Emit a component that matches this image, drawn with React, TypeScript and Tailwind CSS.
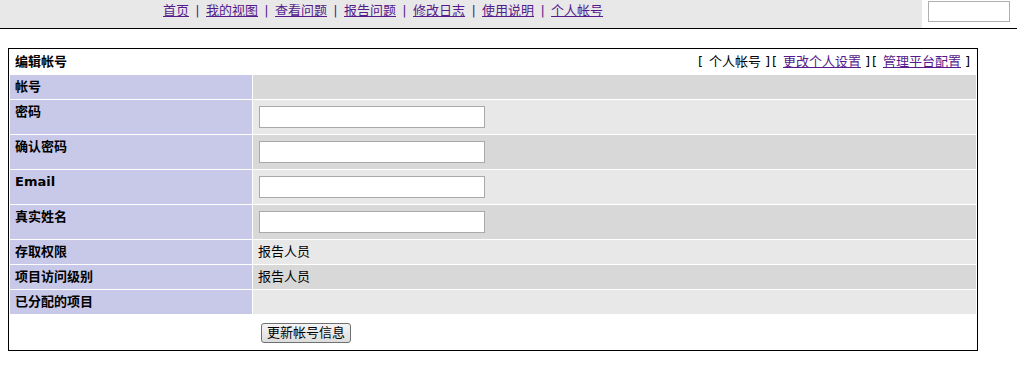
import React from "react";

const font = { fontFamily: '"DejaVu Sans", "Noto Sans CJK SC", sans-serif' };

const navLinks = ["首页", "我的视图", "查看问题", "报告问题", "修改日志", "使用说明", "个人帐号"];

type Row = { label: string; kind: "empty" | "input" | "text"; value?: string; dark: boolean };

const rows: Row[] = [
  { label: "帐号", kind: "empty", dark: true },
  { label: "密码", kind: "input", dark: false },
  { label: "确认密码", kind: "input", dark: true },
  { label: "Email", kind: "input", dark: false },
  { label: "真实姓名", kind: "input", dark: true },
  { label: "存取权限", kind: "text", value: "报告人员", dark: false },
  { label: "项目访问级别", kind: "text", value: "报告人员", dark: true },
  { label: "已分配的项目", kind: "empty", dark: false },
];

function Bracketed({ children, link }: { children: React.ReactNode; link: boolean }) {
  return (
    <span className="inline-flex">
      <span className="inline-block w-[11px] text-left">[</span>
      {link ? (
        <a href="#" className="text-[#551a8b] underline">
          {children}
        </a>
      ) : (
        <span>{children}</span>
      )}
      <span className="inline-block w-[11px] text-right pr-[2px]">]</span>
    </span>
  );
}

export default function App() {
  return (
    <div className="bg-white min-h-[366px] text-[13px] text-black" style={font}>
      {/* top menu */}
      <div className="flex h-[29px] border-b border-black">
        <div className="w-[922px] h-[28px] bg-[#e8e8e8] pl-[163px] pt-[3px] leading-[16px] flex">
          {navLinks.map((l, i) => (
            <React.Fragment key={l}>
              <a href="#" className="text-[#551a8b] underline">
                {l}
              </a>
              {i < navLinks.length - 1 && (
                <span className="inline-block w-[17px] text-center text-[#551a8b]">|</span>
              )}
            </React.Fragment>
          ))}
        </div>
        <div className="flex-1 h-[28px] bg-white pl-[6px] pt-px">
          <input className="w-[82px] h-[21px] border border-[#b0b0b0] bg-white" />
        </div>
      </div>

      {/* main table */}
      <div className="ml-[8px] mt-[19px] w-[970px] border border-black p-px">
        <div className="grid grid-cols-[242px_723px] gap-px leading-[16px]">
          <div className="col-span-2 h-[24px] flex items-center justify-between pl-[5px] pr-[4px]">
            <span className="font-bold">编辑帐号</span>
            <span className="flex">
              <Bracketed link={false}>个人帐号</Bracketed>
              <Bracketed link={true}>更改个人设置</Bracketed>
              <Bracketed link={true}>管理平台配置</Bracketed>
            </span>
          </div>
          {rows.map((r) => {
            const h = r.kind === "input" ? "h-[34px]" : "h-[24px]";
            const bg = r.dark ? "bg-[#d8d8d8]" : "bg-[#e8e8e8]";
            return (
              <React.Fragment key={r.label}>
                <div className={`${h} bg-[#c8c8e8] pl-[5px] pt-[4px] font-bold`}>{r.label}</div>
                <div className={`${h} ${bg} pl-[5px] ${r.kind === "input" ? "pt-[6px]" : "pt-[4px]"}`}>
                  {r.kind === "input" && (
                    <input className="ml-px w-[226px] h-[22px] border border-[#a9a9a9] bg-white block" />
                  )}
                  {r.kind === "text" && <span>{r.value}</span>}
                </div>
              </React.Fragment>
            );
          })}
          <div className="h-[34px] bg-white" />
          <div className="h-[34px] bg-white pl-[8px] pt-[8px]">
            <button className="h-[20px] px-[5px] leading-[16px] border border-[#707070] rounded-[3px] bg-gradient-to-b from-[#f4f4f4] to-[#dcdcdc] text-black text-[13px]">
              更新帐号信息
            </button>
          </div>
        </div>
      </div>
    </div>
  );
}
